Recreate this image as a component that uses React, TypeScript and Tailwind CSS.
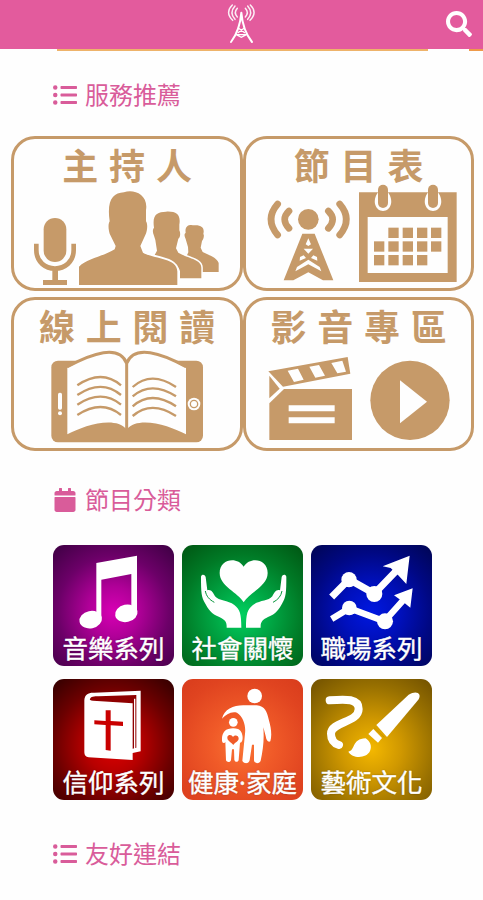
import React from 'react';
import { FaCalendar, FaListUl, FaSearch } from 'react-icons/fa';

const GOLD = '#c69a69';

type Service = {
  title: string;
  viewBox: string;
  art: React.ReactNode;
};

type Category = {
  title: React.ReactNode;
  viewBox: string;
  tone: string;
  art: React.ReactNode;
};

const services: Service[] = [
  { title: '主持人', viewBox: '42 174 678 300', art: <HostArt /> },
  { title: '節目表', viewBox: '18 174 675 300', art: <ScheduleArt /> },
  { title: '線上閱讀', viewBox: '42 177 678 297', art: <ReadingArt /> },
  { title: '影音專區', viewBox: '18 177 675 297', art: <MediaArt /> },
];

const categories: Category[] = [
  {
    title: '音樂系列',
    viewBox: '40 195 363 264',
    tone: 'bg-[radial-gradient(circle_at_50%_55%,#d800b4_0%,#b00098_28%,#6c0068_62%,#3c0042_100%)]',
    art: <MusicArt />,
  },
  {
    title: '社會關懷',
    viewBox: '21 15 363 264',
    tone: 'bg-[radial-gradient(circle_at_50%_58%,#00d060_0%,#00a845_30%,#007a26_65%,#005512_100%)]',
    art: <CareArt />,
  },
  {
    title: '職場系列',
    viewBox: '407 15 363 264',
    tone: 'bg-[radial-gradient(circle_at_50%_55%,#0018e0_0%,#0010bc_32%,#000884_65%,#000552_100%)]',
    art: <CareerArt />,
  },
  {
    title: '信仰系列',
    viewBox: '40 13 363 264',
    tone: 'bg-[radial-gradient(circle_at_50%_55%,#e00000_0%,#b80000_30%,#6c0000_65%,#300000_100%)]',
    art: <FaithArt />,
  },
  {
    title: <>健康<span className="font-['Noto_Sans',sans-serif]">·</span>家庭</>,
    viewBox: '21 13 363 264',
    tone: 'bg-[radial-gradient(circle_at_50%_55%,#fa7434_0%,#f05a28_35%,#e04420_75%,#d83c1c_100%)]',
    art: <FamilyArt />,
  },
  {
    title: '藝術文化',
    viewBox: '407 13 363 264',
    tone: 'bg-[radial-gradient(circle_at_50%_58%,#f4b800_0%,#d09800_32%,#987000_68%,#705000_100%)]',
    art: <CultureArt />,
  },
];

export default function App() {
  return (
    <div className="h-[900px] w-[483px] overflow-hidden bg-[#fefefe] font-['Noto_Sans_CJK_TC',sans-serif]">
      <header className="grid h-[49px] grid-cols-[1fr_29px_1fr] items-center bg-[#e35b9d] pb-[2px] text-white">
        <span />
        <TowerLogo />
        <FaSearch size={26} className="mr-[11px] justify-self-end" />
      </header>
      <div className="flex h-[2px] justify-between pl-[57px]">
        <div className="w-[371px] bg-[#eeb36a]" />
        <div className="w-[14px] bg-[#ee9a4a]" />
      </div>

      <SectionTitle icon={<FaListUl size={24} />} className="mt-[26px]">服務推薦</SectionTitle>
      <div className="mt-[24px] ml-[11px] grid grid-cols-[232px_231px] grid-rows-[155px_154px] gap-y-[6px]">
        {services.map((service) => (
          <ServiceCard key={service.viewBox + service.title} {...service} />
        ))}
      </div>

      <SectionTitle icon={<FaCalendar size={24} />} className="mt-[31px]">節目分類</SectionTitle>
      <div className="mt-[28px] ml-[53px] grid w-[379px] grid-cols-3 gap-x-2 gap-y-[13px]">
        {categories.map((category) => (
          <CategoryTile key={category.tone} {...category} />
        ))}
      </div>

      <SectionTitle icon={<FaListUl size={24} />} className="mt-[36px]">友好連結</SectionTitle>
    </div>
  );
}

function SectionTitle({ icon, className, children }: { icon: React.ReactNode; className: string; children: React.ReactNode }) {
  return (
    <h2 className={`flex h-[35px] items-center gap-2 pl-[53px] text-[24px] text-[#d95c9a] ${className}`}>
      {icon}
      <span className="h-[35px] leading-[33px]">{children}</span>
    </h2>
  );
}

function ServiceCard({ title, viewBox, art }: Service) {
  return (
    <div className="flex flex-col rounded-[24px] border-[3px] border-[#c69a69] text-[#c69a69]">
      <h3 className="h-[49px] pl-[11px] text-center text-[36px] leading-[50px] font-bold tracking-[10.8px] whitespace-nowrap">{title}</h3>
      <svg viewBox={viewBox} className="min-h-0 w-full flex-1 overflow-visible" fill={GOLD}>
        {art}
      </svg>
    </div>
  );
}

function CategoryTile({ title, viewBox, tone, art }: Category) {
  return (
    <div className={`h-[121px] overflow-hidden rounded-[11px] text-white ${tone}`}>
      <svg viewBox={viewBox} className="h-[88px] w-[121px]" fill="#fff">
        {art}
      </svg>
      <p className="h-[28px] text-center text-[25.5px] leading-[27px] whitespace-nowrap [-webkit-text-stroke:0.4px_#fff] [text-shadow:0_0_2px_rgba(0,0,0,0.4)]">{title}</p>
    </div>
  );
}

function TowerLogo() {
  return (
    <svg viewBox="684 9 87 123" className="h-[41px] w-[29px]" fill="none" stroke="#fff" strokeLinecap="round">
      <path d="M727 38 C724 75 716 100 696 126 M727 38 C730 75 738 100 759 126" strokeWidth="6" />
      <path d="M718 84 L737 98 M736 84 L717 98 M712 104 H742 M712 104 L727 112 L742 104" strokeWidth="4" />
      <g strokeWidth="4.5" opacity="0.9">
        <path d="M700 15 Q677 37 701 61 M708 18 Q690 38 708 58 M715 25 Q703 38 715 51" />
        <path d="M754 15 Q777 37 753 61 M746 18 Q764 38 746 58 M739 25 Q751 38 739 51" />
      </g>
    </svg>
  );
}

// Gold line art of the service cards

function HostArt() {
  return (
    <>
      <path d="M557 327 C552 315 553 311 557 309 C553 281 574 284 583 286 C608 285 614 297 610 312 C614 316 610 330 606 333 L602 353 L608 366 C628 376 651 383 656 399 V426 H600 L598 407 L558 382 L565 367 L564 351 Z" />
      <path d="M462 317 C457 307 458 298 462 293 C456 252 472 246 498 245 C530 243 543 255 538 284 L538 301 C543 310 540 323 535 326 L528 355 L535 368 C565 386 604 388 604 413 V445 H540 V424 C538 401 493 391 464 375 L471 362 L466 330 Z" stroke="#fff" strokeWidth="9" paintOrder="stroke" />
      <path d="M329 311 C324 295 325 280 329 274 C320 211 338 189 372 187 C400 176 446 193 438 240 L438 274 C444 282 442 304 436 315 L421 348 L429 368 C459 387 530 382 532 424 V465 H237 V410 C260 386 316 377 344 358 L347 348 Z" stroke="#fff" strokeWidth="11" paintOrder="stroke" />
      <rect x="131" y="264" width="68" height="132" rx="34" />
      <path d="M109 341 V360 C109 434 221 434 221 360 V341" fill="none" stroke={GOLD} strokeWidth="14" />
      <path d="M157 413 H174 V450 H201 V465 H129 V450 H157 Z" />
    </>
  );
}

function ScheduleArt() {
  const cells = [
    [445, 293], [488, 293], [531, 293], [573, 293],
    [402, 334], [445, 334], [488, 334], [531, 334], [573, 334],
    [402, 375], [445, 375], [488, 375], [531, 375],
  ];

  return (
    <>
      <circle cx="205" cy="268" r="31" />
      <g fill="none" stroke={GOLD} strokeWidth="20" strokeLinecap="round">
        <path d="M113 222 Q73 268 113 315 M147 243 Q121 268 147 295" />
        <path d="M299 222 Q339 268 299 315 M265 243 Q291 268 265 295" />
      </g>
      <path d="M187 311 H224 L280 451 H249 L205 427 L160 451 H131 Z" />
      <g fill="#fefefe">
        <path d="M205 325 L213 343 L205 348 L197 343 Z M191 356 H219 L205 371 Z M180 381 L191 376 L198 384 L179 392 Z M231 381 L220 376 L213 384 L232 392 Z" />
        <path d="M171 411 L205 389 L239 411 L244 424 L205 403 L166 424 Z" />
      </g>
      <path d="M357 187 H650 V456 H357 Z" />
      <rect x="383" y="261" width="240" height="168" fill="#fefefe" />
      {cells.map(([x, y]) => (
        <rect key={`${x}-${y}`} x={x} y={y} width="31" height="31" />
      ))}
      {[429, 579].map((x) => (
        <g key={x}>
          <path d={`M${x - 15} 187 C${x - 34} 213 ${x - 23} 243 ${x} 243 C${x + 23} 243 ${x + 34} 213 ${x + 15} 187`} fill="#fefefe" />
          <rect x={x - 15} y="164" width="30" height="70" rx="15" />
        </g>
      ))}
    </>
  );
}

function ReadingArt() {
  return (
    <>
      <rect x="154" y="212" width="455" height="245" rx="20" />
      <path d="M202 234 C272 195 354 157 380 218 C406 157 488 195 558 234 V433 C510 407 415 376 380 418 C345 376 250 407 202 433 Z" fill="#fefefe" />
      <g fill="none" stroke={GOLD} strokeWidth="9">
        <path d="M202 230 C276 191 357 161 380 220 C403 161 486 191 558 230 M380 216 V420" />
        <path strokeWidth="7" d="M232 286 Q305 236 363 286 M232 315 Q305 266 363 315 M232 344 Q305 296 363 344 M232 375 Q305 327 363 375" />
        <path strokeWidth="7" d="M398 291 Q454 241 528 291 M398 319 Q454 271 528 319 M398 349 Q454 299 528 349 M398 378 Q454 329 528 378" />
      </g>
      <rect x="174" y="308" width="12" height="51" rx="5" fill="#fefefe" />
      <circle cx="180" cy="370" r="6" fill="#fefefe" />
      <circle cx="582" cy="342" r="19" fill="#fefefe" />
      <circle cx="582" cy="342" r="11" fill="none" stroke={GOLD} strokeWidth="4" />
    </>
  );
}

function MediaArt() {
  return (
    <>
      <path d="M85 244 L323 201 L331 251 L129 290 Z" />
      <path d="M88 257 L119 296 L88 325 Z" />
      <path d="M132 297 H336 V450 H88 V340 Z" />
      <g fill="#fefefe">
        <path d="M143 242 L174 236 L191 269 L162 276 Z M208 230 L237 225 L255 257 L226 263 Z M274 219 L307 212 L318 245 L292 250 Z" />
        <path d="M146 346 H284 V364 H146 Z M146 382 H284 V400 H146 Z" />
      </g>
      <circle cx="510" cy="331" r="119" />
      <path d="M480 271 L561 335 L480 400 Z" fill="#fefefe" />
    </>
  );
}

// White pictograms of the category tiles

function MusicArt() {
  return (
    <>
      <path d="M170 249 L292 227 V403 H275 V282 L185 299 V419 H170 Z" />
      <ellipse cx="153" cy="419" rx="34" ry="26" transform="rotate(-12 153 419)" />
      <ellipse cx="260" cy="400" rx="34" ry="26" transform="rotate(-12 260 400)" />
    </>
  );
}

function CareArt() {
  const hand = 'M78 110 C80 102 89 102 92 111 L97 151 C108 147 114 157 120 169 C132 184 158 180 178 195 C195 208 199 222 199 263 H155 C156 245 149 239 133 231 C109 221 100 208 91 191 C79 171 78 157 78 110 Z';

  return (
    <>
      <path d="M206 187 C189 157 134 139 134 99 C134 56 187 48 206 80 C225 48 278 56 278 99 C278 139 223 157 206 187 Z" />
      {['', 'translate(412 0) scale(-1 1)'].map((transform) => (
        <g key={transform} transform={transform}>
          <path d={hand} />
          <path d="M91 153 C94 169 103 179 118 187" fill="none" stroke="#07963c" strokeWidth="3" />
        </g>
      ))}
    </>
  );
}

function CareerArt() {
  return (
    <>
      <g fill="none" stroke="#fff" strokeLinejoin="round">
        <path d="M469 171 L521 118 L597 161 L667 88" strokeWidth="21" />
        <path d="M469 237 L522 205 L627 244 L688 176" strokeWidth="19" />
      </g>
      <circle cx="521" cy="119" r="23" />
      <circle cx="597" cy="162" r="24" />
      <circle cx="522" cy="204" r="22" />
      <circle cx="629" cy="244" r="24" />
      <path d="M703 47 L693 132 L668 105 L646 84 L622 79 Z" />
      <path d="M712 145 L705 203 L684 186 L656 166 Z" />
    </>
  );
}

function FaithArt() {
  return (
    <>
      <path d="M134 77 C135 58 147 53 164 54 L303 48 V230 L279 235 V256 L147 248 Q134 246 134 233 Z" />
      <path d="M151 73 C153 66 163 65 177 65 L290 61 V219 L279 222 V86 L160 78 Q148 77 151 73 Z" fill="#8f0000" />
      <path d="M285 72 V224" stroke="#fff" strokeWidth="4" />
      <path d="M198 107 H213 V139 L250 141 V154 L213 152 V228 L198 226 V151 L164 149 V137 L198 139 Z" fill="#c90000" />
    </>
  );
}

function FamilyArt() {
  return (
    <>
      <circle cx="239" cy="64" r="22" />
      <path d="M141 132 C147 102 180 90 211 92 H245 C270 94 276 111 281 134 C289 161 291 184 286 200 C280 204 274 198 272 184 L265 158 C268 195 264 226 257 258 C254 268 238 268 237 257 V210 H231 L224 257 C221 269 205 267 202 258 L210 177 C213 153 205 126 186 114 C168 109 153 120 141 132 Z" />
      <circle cx="175" cy="143" r="13" />
      <path d="M160 163 C142 168 139 188 142 203 C146 207 150 204 151 201 L153 257 C156 264 166 264 168 256 L171 224 H177 L178 256 C181 264 190 263 191 255 L195 204 C207 205 206 169 189 163 Q174 159 160 163 Z" />
      <path d="M175 211 C166 200 156 199 157 187 C160 178 171 180 174 187 C180 179 191 182 191 192 C190 201 180 202 175 211 Z" fill="#f05a28" />
    </>
  );
}

function CultureArt() {
  return (
    <>
      <path d="M463 77 C514 73 550 72 550 103 C550 144 467 141 467 177 C467 199 479 207 491 211" fill="none" stroke="#fff" strokeWidth="24" strokeLinecap="round" />
      <path d="M603 151 L700 60 C723 46 741 56 729 75 L635 187 Z" />
      <path d="M594 163 L620 190 L608 204 L579 178 Z" />
      <path d="M571 191 C584 200 591 214 584 229 C573 252 532 253 519 231 C540 229 529 192 571 191 Z" />
      <path d="M596 159 L627 188" stroke="#cb9500" strokeWidth="3" />
    </>
  );
}
